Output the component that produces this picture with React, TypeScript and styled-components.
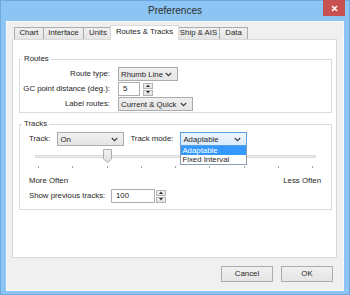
import React from 'react'
import styled, { createGlobalStyle } from 'styled-components'

const GlobalStyle = createGlobalStyle`
  html, body {
    margin: 0;
    padding: 0;
  }
  body {
    font-family: 'Liberation Sans', Arial, sans-serif;
    color: #262626;
  }
  * {
    box-sizing: border-box;
  }
`

const Window = styled.div`
  width: 350px;
  height: 295px;
  display: flex;
  flex-direction: column;
  background: #8cc4f3;
  border: 1px solid #6ea8e0;
  padding: 0 5px 3px;
`

const TitleBar = styled.div`
  height: 20px;
  display: grid;
  grid-template-columns: 1fr auto 1fr;
  align-items: start;
`

const Title = styled.div`
  grid-column: 2;
  font-size: 10px;
  line-height: 20px;
  color: #2e2e2e;
`

const CloseButton = styled.div`
  grid-column: 3;
  justify-self: end;
  width: 22px;
  height: 16px;
  margin: -1px -1px 0 0;
  background: #c75050;
  display: flex;
  align-items: center;
  justify-content: center;
`

const Client = styled.div`
  flex: 1;
  display: flex;
  flex-direction: column;
  background: #f0f0f0;
  border: 1px solid #f8fbfe;
  padding: 3px 6px 8px 5px;
`

const TabRow = styled.div`
  height: 15px;
  display: flex;
  align-items: flex-end;
  padding-left: 2px;
  margin-bottom: -1px;
  position: relative;
  z-index: 1;
`

const Tab = styled.div<{ $width: number; $active?: boolean; $ml?: number; $mr?: number }>`
  width: ${(p) => p.$width}px;
  height: ${(p) => (p.$active ? 15 : 12)}px;
  margin-left: ${(p) => p.$ml ?? 0}px;
  margin-right: ${(p) => p.$mr ?? 0}px;
  margin-bottom: ${(p) => (p.$active ? 0 : 1)}px;
  border: 1px solid ${(p) => (p.$active ? '#d9d9d9' : '#acacac')};
  border-bottom: none;
  background: ${(p) => (p.$active ? '#ffffff' : 'linear-gradient(#f0f0f0, #e5e5e5)')};
  font-size: 7.8px;
  line-height: ${(p) => (p.$active ? 12 : 10)}px;
  text-align: center;
  white-space: nowrap;
  position: relative;
  z-index: ${(p) => (p.$active ? 2 : 1)};
`

const Panel = styled.div`
  flex: 1;
  background: #ffffff;
  border: 1px solid #d9d9d9;
  padding: 14px 4px 0 6px;
`

const Group = styled.fieldset<{ $mb?: number }>`
  margin: 0 0 ${(p) => p.$mb ?? 0}px 0;
  padding: 0;
  min-width: 0;
  border: 1px solid #dcdcdc;
`

const Legend = styled.legend`
  margin-left: 2px;
  padding: 0 2px;
  font-size: 7.8px;
  line-height: 10px;
`

const RoutesBody = styled.div`
  display: grid;
  grid-template-columns: 90px auto;
  column-gap: 8px;
  row-gap: 1px;
  align-items: center;
  justify-items: start;
  padding: 3px 0 1px;
`

const Label = styled.span<{ $right?: boolean; $mr?: number; $width?: number }>`
  font-size: 7.8px;
  line-height: 10px;
  white-space: nowrap;
  justify-self: ${(p) => (p.$right ? 'end' : 'start')};
  margin-right: ${(p) => p.$mr ?? 0}px;
  ${(p) => (p.$width ? `width: ${p.$width}px;` : '')}
`

const ComboWrap = styled.div<{ $mr?: number }>`
  position: relative;
  margin-right: ${(p) => p.$mr ?? 0}px;
`

const Combo = styled.div<{ $width: number; $focus?: boolean }>`
  width: ${(p) => p.$width}px;
  height: 14px;
  display: flex;
  align-items: center;
  justify-content: space-between;
  padding: 0 5px 0 2px;
  border: 1px solid ${(p) => (p.$focus ? '#5b9fe3' : '#acacac')};
  background: ${(p) =>
    p.$focus ? 'linear-gradient(#eef6fd, #d9ebfb)' : 'linear-gradient(#f0f0f0, #e5e5e5)'};
  font-size: 7.8px;
  white-space: nowrap;
`

const DropList = styled.div`
  position: absolute;
  top: 100%;
  left: 0;
  width: 100%;
  background: #ffffff;
  border: 1px solid #8a9ab0;
  border-top: none;
  z-index: 5;
`

const DropItem = styled.div<{ $selected?: boolean }>`
  height: 9px;
  padding-left: 1px;
  font-size: 7.8px;
  line-height: 9px;
  background: ${(p) => (p.$selected ? '#3399ff' : 'transparent')};
  color: ${(p) => (p.$selected ? '#ffffff' : '#262626')};
  white-space: nowrap;
`

const Spin = styled.div<{ $gap: number }>`
  display: flex;
  align-items: center;
  gap: ${(p) => p.$gap}px;
`

const SpinInput = styled.div<{ $width: number }>`
  width: ${(p) => p.$width}px;
  height: 14px;
  border: 1px solid #abadb3;
  background: #ffffff;
  padding-left: 4px;
  font-size: 7.8px;
  line-height: 12px;
`

const SpinArrows = styled.div`
  width: 10px;
  display: flex;
  flex-direction: column;
  gap: 1px;
`

const ArrowBox = styled.div`
  height: 6px;
  border: 1px solid #b4b4b4;
  background: linear-gradient(#f2f2f2, #e2e2e2);
  display: flex;
  align-items: center;
  justify-content: center;
`

const TracksBody = styled.div`
  display: flex;
  flex-direction: column;
  padding: 3px 10px 6px 9px;
`

const TrackRow = styled.div`
  display: flex;
  align-items: center;
  height: 14px;
`

const Slider = styled.div`
  position: relative;
  height: 22px;
  margin: 2px 5px 0 6px;
`

const SliderTrack = styled.div`
  height: 3px;
  margin-top: 7px;
  background: #eceeee;
  border: 1px solid #dadada;
`

const Thumb = styled.div`
  position: absolute;
  top: 1px;
  width: 9px;
  height: 14px;
`

const Ticks = styled.div`
  display: flex;
  justify-content: space-between;
  margin-top: 8px;
  padding: 0 3px;
`

const Tick = styled.div`
  width: 1px;
  height: 2px;
  background: #a4a4a4;
`

const ScaleLabels = styled.div`
  display: flex;
  justify-content: space-between;
  margin-top: 6px;
  font-size: 7.8px;
  line-height: 10px;
`

const ShowRow = styled.div`
  display: flex;
  align-items: center;
  margin-top: 3px;
  gap: 8px;
`

const ButtonRow = styled.div`
  display: flex;
  justify-content: flex-end;
  gap: 8px;
  margin-top: 8px;
  padding-right: 4px;
`

const Button = styled.div`
  width: 52px;
  height: 16px;
  border: 1px solid #acacac;
  background: linear-gradient(#f0f0f0, #e5e5e5);
  font-size: 7.8px;
  line-height: 14px;
  text-align: center;
`

const Chevron = () => (
  <svg width="7" height="5" viewBox="0 0 7 5">
    <path d="M0.8 1 L3.5 3.7 L6.2 1" fill="none" stroke="#404040" strokeWidth="1.2" />
  </svg>
)

const Arrow = ({ up }: { up?: boolean }) => (
  <svg width="4" height="3" viewBox="0 0 4 3">
    <path d={up ? 'M0 3 L2 0.5 L4 3 Z' : 'M0 0 L2 2.5 L4 0 Z'} fill="#333" />
  </svg>
)

const SpinBox = ({ value, width, gap }: { value: string; width: number; gap: number }) => (
  <Spin $gap={gap}>
    <SpinInput $width={width}>{value}</SpinInput>
    <SpinArrows>
      <ArrowBox>
        <Arrow up />
      </ArrowBox>
      <ArrowBox>
        <Arrow />
      </ArrowBox>
    </SpinArrows>
  </Spin>
)

const tabs = [
  { label: 'Chart', width: 30 },
  { label: 'Interface', width: 41, ml: -1 },
  { label: 'Units', width: 30, ml: -1 },
  { label: 'Routes & Tracks', width: 69, ml: -3, mr: -2, active: true },
  { label: 'Ship & AIS', width: 43 },
  { label: 'Data', width: 29, ml: -1 },
]

const App: React.FC = () => {
  const ticks = Array.from({ length: 9 })
  return (
    <>
      <GlobalStyle />
      <Window>
        <TitleBar>
          <Title>Preferences</Title>
          <CloseButton>
            <svg width="7" height="7" viewBox="0 0 7 7">
              <path d="M1 1 L6 6 M6 1 L1 6" stroke="#fff" strokeWidth="1.6" />
            </svg>
          </CloseButton>
        </TitleBar>
        <Client>
          <TabRow>
            {tabs.map((t) => (
              <Tab key={t.label} $width={t.width} $ml={t.ml} $mr={t.mr} $active={t.active}>
                {t.label}
              </Tab>
            ))}
          </TabRow>
          <Panel>
            <Group $mb={6}>
              <Legend>Routes</Legend>
              <RoutesBody>
                <Label $right>Route type:</Label>
                <Combo $width={60}>
                  Rhumb Line
                  <Chevron />
                </Combo>
                <Label $right>GC point distance (deg.):</Label>
                <SpinBox value="5" width={22} gap={3} />
                <Label $right>Label routes:</Label>
                <Combo $width={75}>
                  Current &amp; Quick
                  <Chevron />
                </Combo>
              </RoutesBody>
            </Group>
            <Group>
              <Legend>Tracks</Legend>
              <TracksBody>
                <TrackRow>
                  <Label $mr={7}>Track:</Label>
                  <ComboWrap $mr={6}>
                    <Combo $width={67}>
                      On
                      <Chevron />
                    </Combo>
                  </ComboWrap>
                  <Label $mr={7}>Track mode:</Label>
                  <ComboWrap>
                    <Combo $width={67} $focus>
                      Adaptable
                      <Chevron />
                    </Combo>
                    <DropList>
                      <DropItem $selected>Adaptable</DropItem>
                      <DropItem>Fixed Interval</DropItem>
                    </DropList>
                  </ComboWrap>
                </TrackRow>
                <Slider>
                  <SliderTrack />
                  <Thumb style={{ left: 68 }}>
                    <svg width="9" height="14" viewBox="0 0 9 14">
                      <defs>
                        <linearGradient id="thumbFill" x1="0" y1="0" x2="0" y2="1">
                          <stop offset="0" stopColor="#f2f2f2" />
                          <stop offset="1" stopColor="#e0e0e0" />
                        </linearGradient>
                      </defs>
                      <path
                        d="M0.5 0.5 H8.5 V10 L4.5 13.5 L0.5 10 Z"
                        fill="url(#thumbFill)"
                        stroke="#acacac"
                      />
                    </svg>
                  </Thumb>
                  <Ticks>
                    {ticks.map((_, i) => (
                      <Tick key={i} />
                    ))}
                  </Ticks>
                </Slider>
                <ScaleLabels>
                  <span>More Often</span>
                  <span>Less Often</span>
                </ScaleLabels>
                <ShowRow>
                  <Label $width={74}>Show previous tracks:</Label>
                  <SpinBox value="100" width={44} gap={1} />
                </ShowRow>
              </TracksBody>
            </Group>
          </Panel>
          <ButtonRow>
            <Button>Cancel</Button>
            <Button>OK</Button>
          </ButtonRow>
        </Client>
      </Window>
    </>
  )
}

export default App
